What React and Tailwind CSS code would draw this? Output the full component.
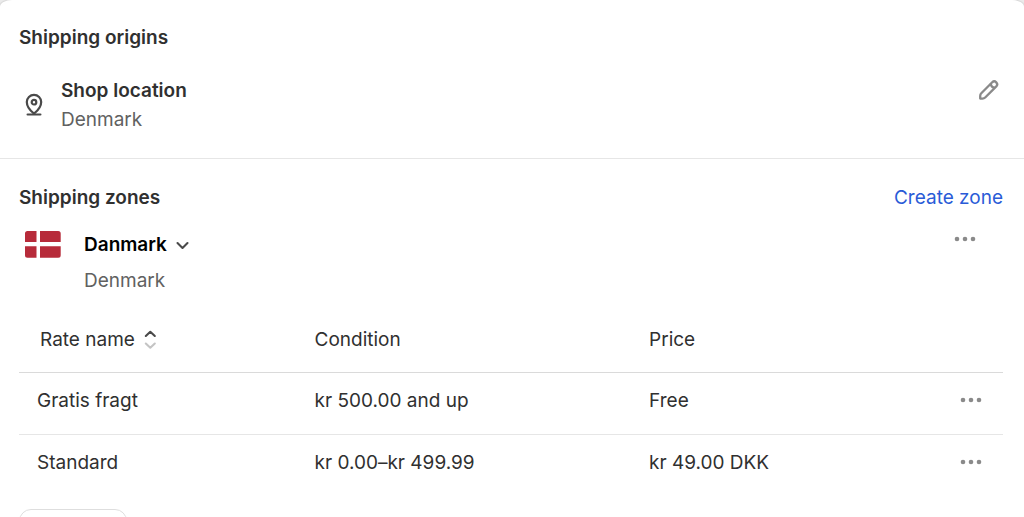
import { useState } from "react";

const rates = [
    { name: "Gratis fragt", condition: "kr 500.00 and up", price: "Free" },
    { name: "Standard", condition: "kr 0.00–kr 499.99", price: "kr 49.00 DKK" },
];

const PinIcon = () => (
    <svg className="block h-6 w-5" viewBox="0 0 20 24" fill="none" stroke="#4a4a4a" strokeWidth="2.2" strokeLinecap="round" strokeLinejoin="round" aria-hidden="true">
        <path d="M10 20.6C5.600 17.200 2.800 13.500 2.800 9a7.200 7.200 0 0 1 14.400 0c0 4.500-2.800 8.200-7.200 11.600Z" />
        <circle cx="10" cy="9.200" r="2.300" />
        <path d="M3.600 21.500h12.800" />
    </svg>
);

const PencilIcon = () => (
    <svg className="block h-6 w-6" viewBox="0 0 24 24" fill="none" stroke="#8a8a8a" strokeWidth="2.3" strokeLinejoin="round" aria-hidden="true">
        <path d="M3.200 20.600v-2.700c0-1 .4-2 1.100-2.700L15.200 4.300a2.900 2.900 0 0 1 4.100 4.100L8.200 19.500c-.7.700-1.700 1.100-2.700 1.100Z" />
        <path d="M13.800 5.700c.2 2.500 1.600 3.900 4.100 4.100" />
    </svg>
);

const DotsIcon = () => (
    <svg className="block h-6 w-6" viewBox="0 0 24 24" fill="#8a8a8a" aria-hidden="true">
        <circle cx="4" cy="12" r="2.300" />
        <circle cx="12" cy="12" r="2.300" />
        <circle cx="20" cy="12" r="2.300" />
    </svg>
);

const ChevronIcon = () => (
    <svg className="block h-4 w-4" viewBox="0 0 16 16" fill="none" stroke="#4a4a4a" strokeWidth="2.1" strokeLinecap="round" strokeLinejoin="round" aria-hidden="true">
        <path d="M3.500 6l5 5 5-5" />
    </svg>
);

const SortIcon = () => (
    <svg className="block h-5 w-4" viewBox="0 0 16 20" fill="none" strokeWidth="2.1" strokeLinecap="round" strokeLinejoin="round" aria-hidden="true">
        <path d="M2.800 6L7.300 1.800l4.500 4.200" stroke="#4a4a4a" />
        <path d="M2.800 13.500L7.300 17.700l4.500-4.200" stroke="#c4c4c4" />
    </svg>
);

const DanishFlag = () => (
    <svg className="block h-7 w-9" viewBox="0 0 36 28" aria-hidden="true">
        <path fill="#b72b3a" d="M2.500 0H11.500V11H0V2.500A2.500 2.500 0 0 1 2.500 0ZM15 0H33.200A2.500 2.500 0 0 1 35.700 2.500V11H15ZM0 15.200H11.500V26.800H2.500A2.500 2.500 0 0 1 0 24.300ZM15 15.200H35.700V24.300A2.500 2.500 0 0 1 33.200 26.800H15Z" />
    </svg>
);

export default function App() {

    const [ascending, setAscending] = useState(true);

    const sorted = [...rates].sort((a, b) =>
        ascending ? a.name.localeCompare(b.name) : b.name.localeCompare(a.name)
    );

    return (
        <div className="bg-[#ebebeb] font-['Inter',sans-serif] text-[19px] leading-7 text-[#303030]">
            <main className="min-h-screen bg-white shadow-[0_0_1px_1px_#d8d8d8] [border-radius:12px_12px_0_0/7px_7px_0_0]">

                {/* Origins */}
                <section className="border-b border-[#e6e6e6] pt-6 pr-[21px] pb-6 pl-[19px]">
                    <h2 className="font-semibold">Shipping origins</h2>
                    <div className="mt-6 flex items-start">
                        <div className="flex h-[58px] w-[42px] items-center pl-[5px]">
                            <PinIcon />
                        </div>
                        <div className="flex-1 leading-[29px]">
                            <h3 className="font-semibold">Shop location</h3>
                            <p className="text-[#616161]">Denmark</p>
                        </div>
                        <button type="button" aria-label="Edit shop location" className="mt-0.5 mr-0.5">
                            <PencilIcon />
                        </button>
                    </div>
                </section>

                {/* Zones */}
                <section className="pt-[25px] pr-[21px] pl-[19px]">
                    <div className="flex justify-between">
                        <h2 className="font-semibold">Shipping zones</h2>
                        <a href="#create-zone" className="text-[#2a5bd7]">Create zone</a>
                    </div>

                    <div className="mt-[19px] flex items-start">
                        <div className="w-[65px] pl-1.5">
                            <DanishFlag />
                        </div>
                        <div className="flex-1">
                            <button type="button" className="flex items-center gap-[7px] font-semibold text-black">
                                Danmark
                                <ChevronIcon />
                            </button>
                            <p className="mt-2 text-[#616161]">Denmark</p>
                        </div>
                        <button type="button" aria-label="Zone actions" className="-mt-1 mr-[26px]">
                            <DotsIcon />
                        </button>
                    </div>

                    {/* Rates */}
                    <table className="mt-3 w-full table-fixed border-separate border-spacing-0 text-left">
                        <thead>
                            <tr>
                                <th className="w-[28%] border-b border-[#dadada] pt-[19px] pb-[18px] pl-[21px] font-normal">
                                    <button type="button" className="flex items-center gap-2" onClick={() => setAscending(!ascending)}>
                                        Rate name
                                        <SortIcon />
                                    </button>
                                </th>
                                <th className="w-[34%] border-b border-[#dadada] pt-[19px] pb-[18px] pl-5 font-normal">Condition</th>
                                <th className="border-b border-[#dadada] pt-[19px] pb-[18px] pl-5 font-normal">Price</th>
                                <th className="w-20 border-b border-[#dadada]" aria-label="Actions"></th>
                            </tr>
                        </thead>
                        <tbody className="[&>tr:not(:last-child)>td]:border-b [&>tr>td]:border-[#e6e6e6]">
                            {sorted.map((rate) => (
                                <tr key={rate.name} className="align-top">
                                    <td className="pt-3.5 pb-[19px] pl-[18px]">{rate.name}</td>
                                    <td className="pt-3.5 pb-[19px] pl-5">{rate.condition}</td>
                                    <td className="pt-3.5 pb-[19px] pl-5">{rate.price}</td>
                                    <td className="pt-[15px] pr-5">
                                        <button type="button" aria-label={`Actions for ${rate.name}`} className="ml-auto block">
                                            <DotsIcon />
                                        </button>
                                    </td>
                                </tr>
                            ))}
                        </tbody>
                    </table>

                    {/* Add rate button, cut off at its top edge */}
                    <div className="mt-[13px] h-2 overflow-hidden">
                        <button type="button" aria-label="Add rate" className="h-11 w-[108px] rounded-xl border border-[#dedede]"></button>
                    </div>
                </section>

            </main>
        </div>
    );
}
